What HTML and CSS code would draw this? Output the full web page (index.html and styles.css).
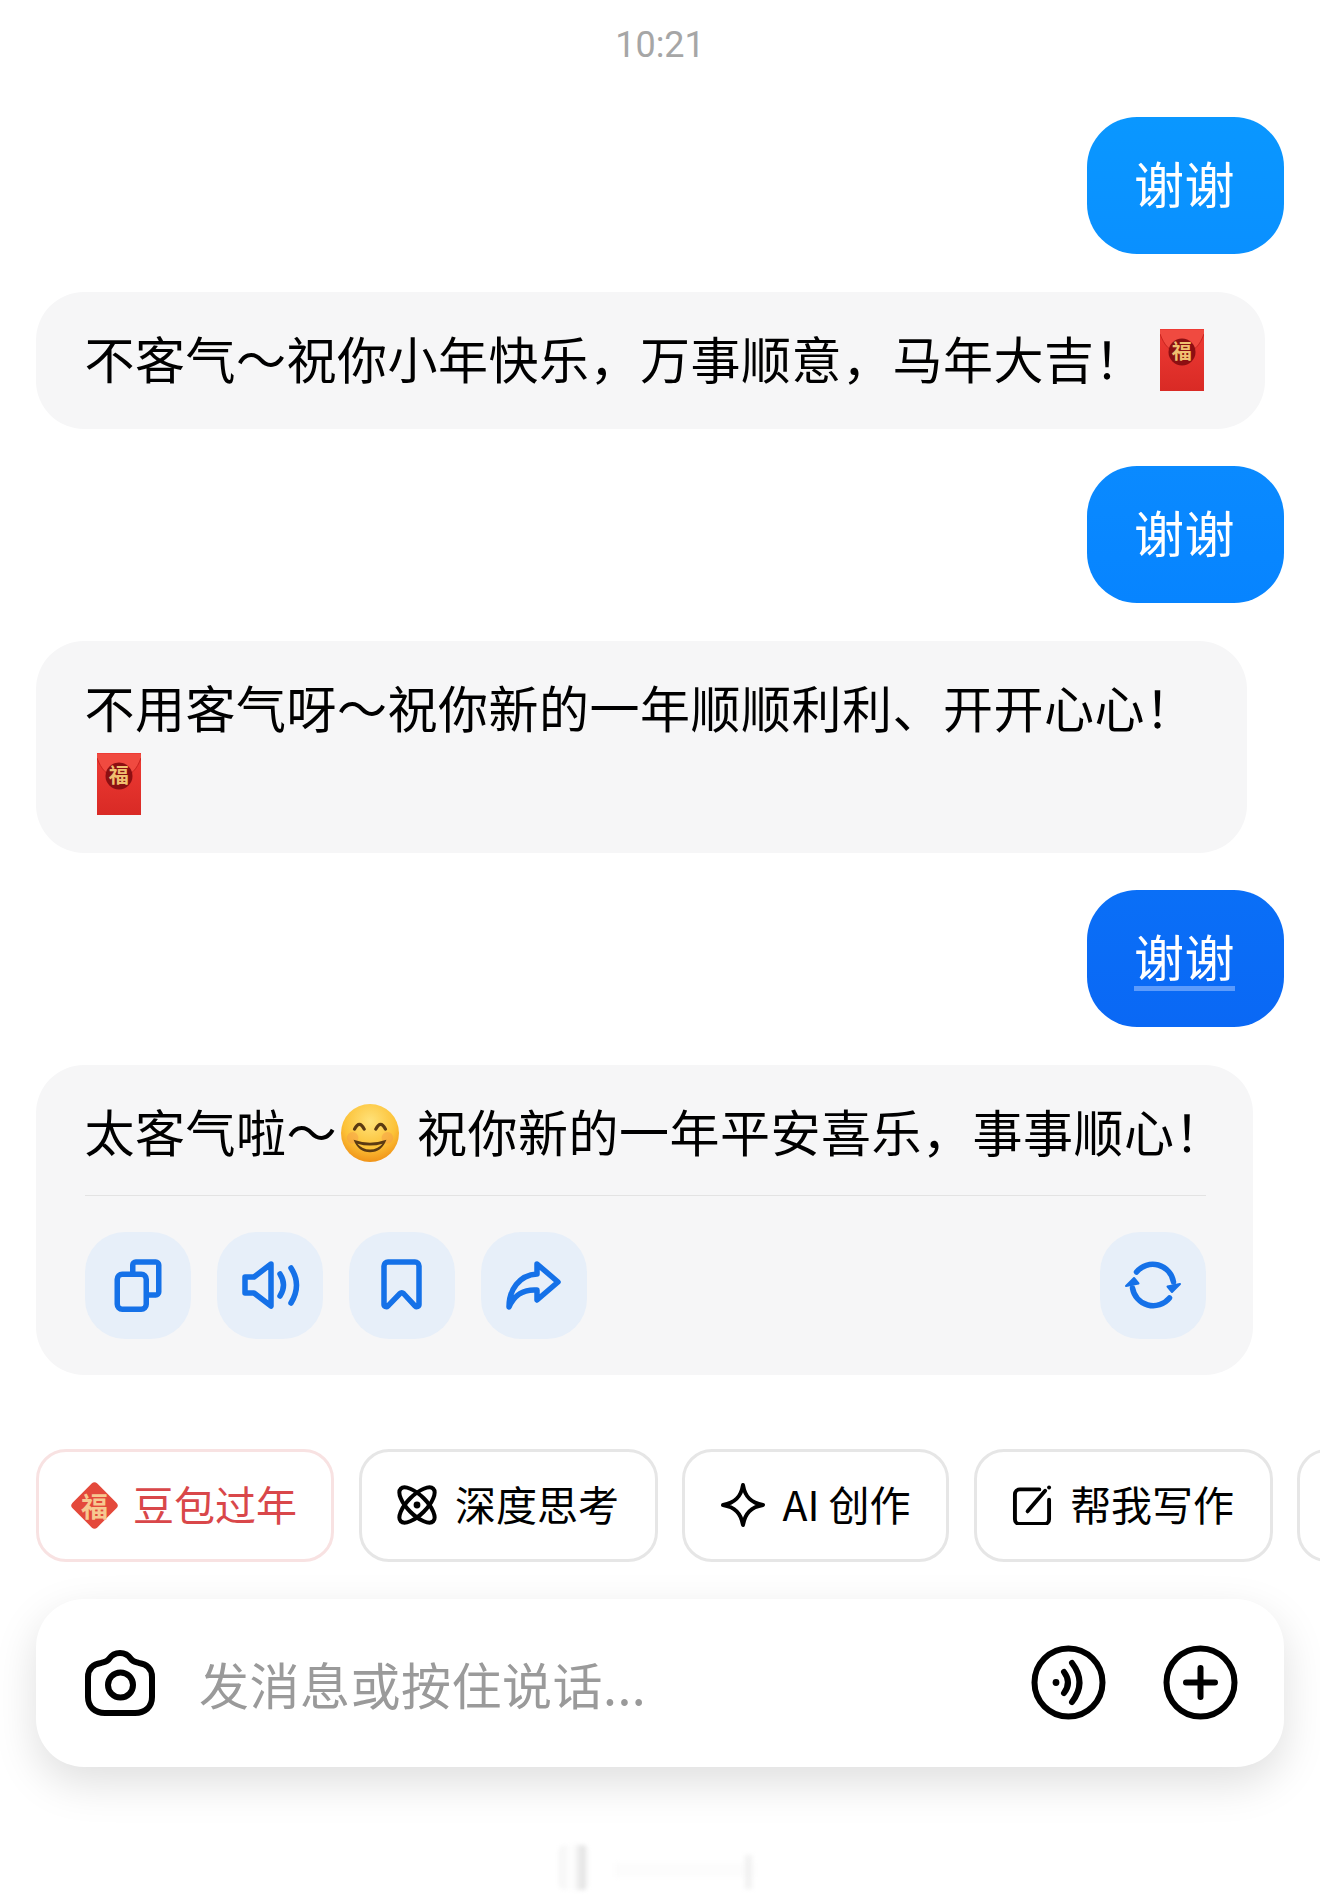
FILE: index.html
```html
<!DOCTYPE html>
<html lang="zh-CN">
<head>
  <meta charset="UTF-8" />
  <title>豆包</title>
  <link rel="stylesheet" href="styles.css">
</head>
<body>
  <svg class="defs" width="0" height="0" aria-hidden="true">
    <defs>
      <linearGradient id="packet-fill" x1="0" y1="0" x2="0" y2="1">
        <stop offset="0" stop-color="#ee3b35"/>
        <stop offset="1" stop-color="#d92a25"/>
      </linearGradient>
      <radialGradient id="smile-fill" cx="0.5" cy="0.3" r="0.75">
        <stop offset="0" stop-color="#ffe27a"/>
        <stop offset="0.6" stop-color="#fcc238"/>
        <stop offset="1" stop-color="#ee8a12"/>
      </radialGradient>
      <symbol id="packet" viewBox="0 0 44 62">
        <rect width="44" height="62" fill="url(#packet-fill)"/>
        <path d="M0 1 H44 V5 C40 16 34 24 22 24 C10 24 4 16 0 5 Z" fill="#f04a40"/>
        <path d="M0 5 C4 16 10 24 22 24 C34 24 40 16 44 5" fill="none" stroke="#c9241f" stroke-width="1"/>
        <circle cx="22" cy="23" r="13.5" fill="#8c0f12"/>
        <text x="22" y="30" text-anchor="middle" class="packet-char">福</text>
      </symbol>
    </defs>
  </svg>

  <main class="page">
    <div class="time">10:21</div>

    <section class="messages">
      <div class="bubble user user-1">谢谢</div>
      <div class="bubble bot bot-1">不客气～祝你小年快乐，万事顺意，马年大吉！<svg class="packet first"><use href="#packet"/></svg></div>
      <div class="bubble user user-2">谢谢</div>
      <div class="bubble bot bot-2">不用客气呀～祝你新的一年顺顺利利、开开心心！<br><svg class="packet"><use href="#packet"/></svg></div>
      <div class="bubble user user-3"><span class="selected">谢谢</span></div>
      <div class="bubble bot bot-3">
        <div class="bot-text">太客气啦～<svg class="smile" viewBox="0 0 60 60">
            <circle cx="30" cy="30" r="30" fill="url(#smile-fill)"/>
            <circle cx="12" cy="35" r="6" fill="#f59a4a" opacity="0.45"/>
            <circle cx="48" cy="35" r="6" fill="#f59a4a" opacity="0.45"/>
            <path d="M14 26 Q19 16 24 26 M36 26 Q41 16 46 26" fill="none" stroke="#5b3a12" stroke-width="3.4" stroke-linecap="round"/>
            <path d="M13 37 Q30 43 47 37 Q42 50 30 50 Q18 50 13 37 Z" fill="#5b3a12"/>
            <path d="M17 41 Q30 45 43 41 Q38 47 30 47 Q22 47 17 41 Z" fill="#fcc238"/>
          </svg>祝你新的一年平安喜乐，事事顺心！</div>
        <div class="divider"></div>
        <div class="actions">
          <button class="action">
            <svg viewBox="0 0 60 60">
              <path d="M24.75 17 V10 a3 3 0 0 1 3-3 H47.75 a3 3 0 0 1 3 3 V37 a3 3 0 0 1-3 3 H41"/>
              <rect x="9.25" y="19.25" width="29" height="35" rx="5"/>
            </svg>
          </button>
          <button class="action">
            <svg viewBox="0 0 60 60">
              <path d="M31 9 L14 22 H5 V38 H14 L31 51 Z"/>
              <path d="M40 19 Q47 30 40 41"/>
              <path d="M51 13 Q62 30 51 48"/>
            </svg>
          </button>
          <button class="action">
            <svg viewBox="0 0 60 60">
              <path d="M12 11a4 4 0 0 1 4-4h27a4 4 0 0 1 4 4v38.5c0 2-2.4 3-3.8 1.6L31.5 38.5c-1-1-2.5-1-3.5 0L15.8 51.1C14.4 52.5 12 51.5 12 49.5z"/>
            </svg>
          </button>
          <button class="action">
            <svg viewBox="0 0 60 60">
              <path d="M33 9 L54 27 L33 45 V35 C20 34 10 40 5 52 C5 35 15 20 33 19 Z"/>
            </svg>
          </button>
          <button class="action action-end">
            <svg viewBox="0 0 60 60">
              <path d="M13.5 17 A21 21 0 0 1 50.5 27"/>
              <path d="M46.5 43 A21 21 0 0 1 9.5 33"/>
              <path class="solid" d="M44.5 31.5 L57 29 L49 37 Z"/>
              <path class="solid" d="M15.5 28.5 L3 31 L11 23 Z"/>
            </svg>
          </button>
        </div>
      </div>
    </section>

    <section class="chips">
      <div class="chip chip-red">
        <span class="lucky"><span class="lucky-char">福</span></span>
        <span>豆包过年</span>
      </div>
      <div class="chip">
        <svg class="chip-icon" viewBox="0 0 40 40">
          <ellipse cx="20" cy="20" rx="23" ry="9.5" transform="rotate(45 20 20)"/>
          <ellipse cx="20" cy="20" rx="23" ry="9.5" transform="rotate(-45 20 20)"/>
          <circle class="solid" cx="20" cy="20" r="3.4"/>
        </svg>
        <span>深度思考</span>
      </div>
      <div class="chip">
        <svg class="chip-icon star" viewBox="0 0 44 44">
          <path d="M22 2 C24 14 30 20 42 22 C30 24 24 30 22 42 C20 30 14 24 2 22 C14 20 20 14 22 2 Z"/>
        </svg>
        <span>AI 创作</span>
      </div>
      <div class="chip">
        <svg class="chip-icon" viewBox="0 0 41 41">
          <path d="M28 4.5 H8 a5 5 0 0 0 -5 5 V35 a5 5 0 0 0 5 5 H33 a5 5 0 0 0 5-5 V15"/>
          <path d="M16 27 L34 6"/>
          <circle class="solid" cx="38" cy="2.5" r="2"/>
        </svg>
        <span>帮我写作</span>
      </div>
      <div class="chip chip-cut"></div>
    </section>

    <section class="composer">
      <svg class="camera" viewBox="0 0 70 66">
        <path d="M35 3 C41 3 44 6 46 9 C48 12 51 12 54 13 C62 14 67 19 67 27 V47 C67 57 60 63 50 63 H20 C10 63 3 57 3 47 V27 C3 19 8 14 16 13 C19 12 22 12 24 9 C26 6 29 3 35 3 Z"/>
        <circle cx="35.5" cy="35" r="12.5"/>
      </svg>
      <div class="placeholder">发消息或按住说话...</div>
      <svg class="round-btn" viewBox="0 0 75 75">
        <circle cx="37.5" cy="37.5" r="34"/>
        <circle class="solid" cx="25" cy="37.5" r="3.4"/>
        <path d="M33 27 Q41 37.5 33 48"/>
        <path d="M41 18 Q56 37.5 41 57"/>
      </svg>
      <svg class="round-btn" viewBox="0 0 75 75">
        <circle cx="37.5" cy="37.5" r="34"/>
        <path d="M37.5 23 V52 M23 37.5 H52"/>
      </svg>
    </section>

    <div class="watermark">
      <span class="mark-big"></span>
      <span class="mark-wide"></span>
      <span class="mark-small"></span>
    </div>
  </main>
</body>
</html>
```

FILE: styles.css
```css
:root {
  --blue: #1571e8;
  --bubble: #f6f6f7;
  --action: #e7eff9;
  --line: #e6e6e6;
}

body {
  margin: 0;
  background: #fff;
  color: #000;
  font-family: "Noto Sans CJK SC", "Liberation Sans", sans-serif;
  overflow: hidden;
}

.defs {
  position: absolute;
}

.packet-char {
  font-family: "Noto Sans CJK SC", sans-serif;
  font-size: 20px;
  font-weight: 700;
  fill: #f0c070;
}

.page {
  position: relative;
  height: 1904px;
  padding: 23px 36px 0;
  box-sizing: border-box;
  overflow: hidden;
}

.time {
  height: 44px;
  line-height: 44px;
  margin-bottom: 50px;
  text-align: center;
  font-family: Roboto, sans-serif;
  font-size: 36px;
  color: #a6a6a6;
}

.messages {
  display: flex;
  flex-direction: column;
  align-items: flex-start;
  gap: 37.5px;
}

.bubble {
  padding: 28px 49px 34px 48.5px;
  font-size: 50px;
  line-height: 75px;
  letter-spacing: 0.5px;
  box-sizing: border-box;
}

.user {
  align-self: flex-end;
  width: 197px;
  padding-left: 47px;
  padding-right: 47px;
  border-radius: 50px;
  color: #fff;
}

.user-1 { background: linear-gradient(#0a97ff, #0a90ff); }
.user-2 { background: linear-gradient(#0a8aff, #0784ff); }
.user-3 { background: linear-gradient(#0a6ff7, #0a68f5); }

.selected {
  text-decoration: underline 5px #5c9bfb;
  text-underline-offset: 9px;
}

.bot {
  background: var(--bubble);
  border-radius: 48px;
}

.bot-1 {
  width: 1229px;
  white-space: nowrap;
}

.bot-2 { width: 1211px; }
.bot-3 {
  width: 1217px;
  padding-right: 47px;
  padding-bottom: 36px;
}

.bot-text {
  white-space: nowrap;
}

.packet {
  width: 44px;
  height: 62px;
  margin: 0 12px;
  vertical-align: -12px;
}

.packet.first {
  margin-left: 15px;
}

.smile {
  width: 58px;
  height: 60px;
  margin: 0 18px 0 4px;
  vertical-align: -11px;
}

.divider {
  height: 1px;
  margin: 27px 0 36px;
  background: #e3e3e3;
}

.actions {
  display: flex;
  gap: 26px;
}

.action {
  width: 106px;
  height: 107px;
  padding: 0;
  border: 0;
  border-radius: 40px;
  background: var(--action);
  display: flex;
  align-items: center;
  justify-content: center;
}

.action-end {
  margin-left: auto;
}

.action svg {
  width: 60px;
  height: 60px;
  fill: none;
  stroke: var(--blue);
  stroke-width: 5.5;
  stroke-linecap: round;
  stroke-linejoin: round;
}

.action .solid {
  fill: var(--blue);
  stroke-width: 2;
}

.chips {
  display: flex;
  gap: 24.5px;
  margin: 74px -36px 0 0;
  overflow: hidden;
}

.chip {
  flex-shrink: 0;
  display: flex;
  align-items: center;
  gap: 18px;
  height: 113px;
  padding: 0 35.5px;
  box-sizing: border-box;
  border: 3px solid var(--line);
  border-radius: 30px;
  font-size: 41px;
  white-space: nowrap;
}

.chip > span:last-child {
  margin-bottom: 4px;
}

.chip-cut {
  width: 120px;
}

.chip-red {
  gap: 15px;
  padding: 0 34px 0 32px;
  border-color: #f8e2e2;
  color: #d9474a;
}

.chip-icon {
  width: 40px;
  height: 40px;
  fill: none;
  stroke: #000;
  stroke-width: 4;
  stroke-linecap: round;
  stroke-linejoin: round;
}

.chip-icon .solid {
  fill: #000;
  stroke: none;
}

.chip-icon.star {
  width: 44px;
  height: 44px;
}

.lucky {
  width: 47px;
  height: 47px;
  display: flex;
  align-items: center;
  justify-content: center;
  position: relative;
}

.lucky::before {
  content: "";
  position: absolute;
  width: 35px;
  height: 35px;
  border-radius: 4px;
  background: #e4493b;
  transform: rotate(45deg);
}

.lucky-char {
  position: relative;
  font-size: 27px;
  font-weight: 700;
  color: #f6c890;
}

.composer {
  display: flex;
  align-items: center;
  height: 168px;
  margin-top: 37px;
  padding: 0 46px 0 49px;
  border-radius: 48px;
  background: #fff;
  box-shadow: 0 16px 44px rgba(0, 0, 0, 0.13);
}

.camera {
  width: 70px;
  height: 66px;
  margin-right: 44px;
  fill: none;
  stroke: #000;
  stroke-width: 6;
}

.placeholder {
  flex: 1;
  font-size: 50px;
  letter-spacing: 0.5px;
  color: #9a9a9a;
}

.round-btn {
  width: 75px;
  height: 75px;
  margin-left: 57px;
  fill: none;
  stroke: #000;
  stroke-width: 6;
  stroke-linecap: round;
}

.round-btn .solid {
  fill: #000;
  stroke: none;
}

.watermark {
  position: absolute;
  left: 555px;
  top: 1845px;
  width: 215px;
  height: 46px;
  filter: blur(2px);
}

.watermark span {
  position: absolute;
}

.mark-big {
  left: 4px;
  top: 0;
  width: 30px;
  height: 45px;
  border-radius: 6px;
  background: linear-gradient(90deg, #f4f4f4, #fff 45%, #e2e2e2 80%, #fff);
}

.mark-wide {
  left: 60px;
  top: 18px;
  width: 140px;
  height: 14px;
  background: #fcfcfc;
}

.mark-small {
  left: 190px;
  top: 10px;
  width: 7px;
  height: 34px;
  background: #f2f2f2;
}
```
